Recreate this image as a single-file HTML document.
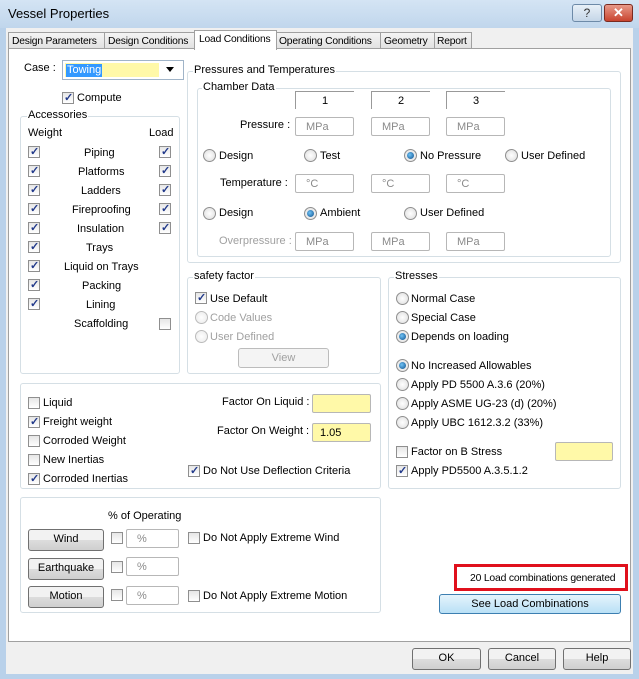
<!DOCTYPE html>
<html><head><style>
*{box-sizing:border-box;margin:0;padding:0}
body{width:639px;height:679px;overflow:hidden;background:#b9d1ea;font-family:"Liberation Sans",sans-serif;font-size:11px;color:#000;position:relative}
div,span{position:absolute}
.t{white-space:nowrap;line-height:13px}
.tb{font-size:10.3px;letter-spacing:-0.2px}
.g{border:1px solid #d5dfe5;border-radius:3px}
.cb{width:12px;height:12px;border:1px solid #8f8f8f;background:linear-gradient(#e6e6e6,#fff)}
.cb.c::after{content:"✓";position:absolute;left:1px;top:-2px;font-size:11px;color:#21398a;font-weight:bold}
.rb{width:13px;height:13px;border:1px solid #8f8f8f;border-radius:50%;background:radial-gradient(#fff,#dcdcdc)}
.rb.c::after{content:"";position:absolute;left:2px;top:2px;width:7px;height:7px;border-radius:50%;background:radial-gradient(circle at 40% 40%,#6fc3f6,#0d4d8a)}
.in{height:19px;border:1px solid #b7b7b7;background:#fff;color:#8a8a8a;padding:3px 0 0 10px;border-radius:2px}
.y{background:#fff9a8;color:#000}
.bt{border:1px solid #707070;border-radius:3px;background:linear-gradient(#f2f2f2 50%,#dddddd 50%,#cfcfcf);text-align:center;line-height:19px}
.d{color:#a0a0a0}
</style></head><body>
<div style="left:0;top:0;width:639px;height:28px;background:linear-gradient(#d4e4f4,#c0d6ec)"></div>
<div class="t" style="left:8px;top:7px;font-size:13px">Vessel Properties</div>
<div style="left:572px;top:4px;width:30px;height:18px;border:1px solid #6d8aa8;border-radius:3px;background:linear-gradient(#e8f0f8,#c5d6e8);text-align:center;color:#333;font-size:12px;line-height:16px">?</div>
<div style="left:604px;top:4px;width:29px;height:18px;border:1px solid #7a2a20;border-radius:3px;background:linear-gradient(#e89a8a,#c8442f);text-align:center;color:#fff;font-weight:bold;font-size:13px;line-height:16px">✕</div>
<div style="left:6px;top:28px;width:627px;height:646px;background:#f0f0f0"></div>
<!-- tabs -->
<div style="left:8px;top:32px;width:97px;height:17px;border:1px solid #a0a0a0;background:linear-gradient(#f4f4f4,#e2e2e2)"></div><div class="t tb" style="left:12px;top:35px">Design Parameters</div>
<div style="left:104px;top:32px;width:91px;height:17px;border:1px solid #a0a0a0;background:linear-gradient(#f4f4f4,#e2e2e2)"></div><div class="t tb" style="left:108px;top:35px">Design Conditions</div>
<div style="left:276px;top:32px;width:105px;height:17px;border:1px solid #a0a0a0;background:linear-gradient(#f4f4f4,#e2e2e2)"></div><div class="t tb" style="left:279px;top:35px">Operating Conditions</div>
<div style="left:380px;top:32px;width:55px;height:17px;border:1px solid #a0a0a0;background:linear-gradient(#f4f4f4,#e2e2e2)"></div><div class="t tb" style="left:384px;top:35px">Geometry</div>
<div style="left:434px;top:32px;width:38px;height:17px;border:1px solid #a0a0a0;background:linear-gradient(#f4f4f4,#e2e2e2)"></div><div class="t tb" style="left:437px;top:35px">Report</div>
<!-- panel -->
<div style="left:8px;top:48px;width:623px;height:594px;border:1px solid #a0a0a0;background:#fff"></div>
<div style="left:194px;top:30px;width:83px;height:20px;border:1px solid #a0a0a0;border-bottom:none;background:#fff"></div><div class="t tb" style="left:199px;top:33px">Load Conditions</div>

<div class="t" style="left:24px;top:62px">Case :</div>
<div style="left:62px;top:60px;width:122px;height:20px;border:1px solid #a0b4c8;background:#fff"></div>
<div style="left:65px;top:63px;width:94px;height:14px;background:#fff9a8"></div>
<div class="t" style="left:66px;top:64px;background:#3399ff;color:#fff;padding:0 1px">Towing</div>
<div style="left:166px;top:67px;border:4px solid transparent;border-top:5px solid #000"></div>
<div class="cb c" style="left:62px;top:92px"></div><div class="t" style="left:77px;top:92px">Compute</div>

<!-- Accessories -->
<div class="g" style="left:20px;top:116px;width:160px;height:258px"></div>
<div class="t" style="left:27px;top:109px;background:#fff;padding:0 1px">Accessories</div>
<div class="t" style="left:28px;top:127px">Weight</div><div class="t" style="left:149px;top:127px">Load</div>
<div class="cb c" style="left:28px;top:146px"></div><div class="t" style="left:84px;top:147px">Piping</div><div class="cb c" style="left:159px;top:146px"></div>
<div class="cb c" style="left:28px;top:165px"></div><div class="t" style="left:78px;top:166px">Platforms</div><div class="cb c" style="left:159px;top:165px"></div>
<div class="cb c" style="left:28px;top:184px"></div><div class="t" style="left:81px;top:185px">Ladders</div><div class="cb c" style="left:159px;top:184px"></div>
<div class="cb c" style="left:28px;top:203px"></div><div class="t" style="left:72px;top:204px">Fireproofing</div><div class="cb c" style="left:159px;top:203px"></div>
<div class="cb c" style="left:28px;top:222px"></div><div class="t" style="left:77px;top:223px">Insulation</div><div class="cb c" style="left:159px;top:222px"></div>
<div class="cb c" style="left:28px;top:241px"></div><div class="t" style="left:86px;top:242px">Trays</div>
<div class="cb c" style="left:28px;top:260px"></div><div class="t" style="left:64px;top:261px">Liquid on Trays</div>
<div class="cb c" style="left:28px;top:279px"></div><div class="t" style="left:82px;top:280px">Packing</div>
<div class="cb c" style="left:28px;top:298px"></div><div class="t" style="left:86px;top:299px">Lining</div>
<div class="t" style="left:74px;top:318px">Scaffolding</div><div class="cb" style="left:159px;top:318px"></div>

<!-- Pressures -->
<div class="g" style="left:187px;top:71px;width:434px;height:192px"></div>
<div class="t" style="left:193px;top:64px;background:#fff;padding:0 1px">Pressures and Temperatures</div>
<div class="g" style="left:197px;top:88px;width:414px;height:169px"></div>
<div class="t" style="left:202px;top:81px;background:#fff;padding:0 1px">Chamber Data</div>
<div style="left:295px;top:91px;width:59px;height:18px;border-left:1px solid #999;border-top:1px solid #999;text-align:center;line-height:18px">1</div>
<div style="left:371px;top:91px;width:59px;height:18px;border-left:1px solid #999;border-top:1px solid #999;text-align:center;line-height:18px">2</div>
<div style="left:446px;top:91px;width:59px;height:18px;border-left:1px solid #999;border-top:1px solid #999;text-align:center;line-height:18px">3</div>
<div class="t" style="left:240px;top:119px">Pressure :</div>
<div class="in" style="left:295px;top:117px;width:59px">MPa</div><div class="in" style="left:371px;top:117px;width:59px">MPa</div><div class="in" style="left:446px;top:117px;width:59px">MPa</div>
<div class="rb" style="left:203px;top:149px"></div><div class="t" style="left:219px;top:150px">Design</div>
<div class="rb" style="left:304px;top:149px"></div><div class="t" style="left:320px;top:150px">Test</div>
<div class="rb c" style="left:404px;top:149px"></div><div class="t" style="left:420px;top:150px">No Pressure</div>
<div class="rb" style="left:505px;top:149px"></div><div class="t" style="left:521px;top:150px">User Defined</div>
<div class="t" style="left:220px;top:177px">Temperature :</div>
<div class="in" style="left:295px;top:174px;width:59px">°C</div><div class="in" style="left:371px;top:174px;width:59px">°C</div><div class="in" style="left:446px;top:174px;width:59px">°C</div>
<div class="rb" style="left:203px;top:207px"></div><div class="t" style="left:219px;top:207px">Design</div>
<div class="rb c" style="left:304px;top:207px"></div><div class="t" style="left:320px;top:207px">Ambient</div>
<div class="rb" style="left:404px;top:207px"></div><div class="t" style="left:420px;top:207px">User Defined</div>
<div class="t d" style="left:219px;top:235px">Overpressure :</div>
<div class="in" style="left:295px;top:232px;width:59px">MPa</div><div class="in" style="left:371px;top:232px;width:59px">MPa</div><div class="in" style="left:446px;top:232px;width:59px">MPa</div>

<!-- safety -->
<div class="g" style="left:187px;top:277px;width:194px;height:97px"></div>
<div class="t" style="left:193px;top:270px;background:#fff;padding:0 1px">safety factor</div>
<div class="cb c" style="left:195px;top:292px"></div><div class="t" style="left:210px;top:293px">Use Default</div>
<div class="rb" style="left:195px;top:311px;opacity:.6"></div><div class="t d" style="left:210px;top:312px">Code Values</div>
<div class="rb" style="left:195px;top:330px;opacity:.6"></div><div class="t d" style="left:210px;top:331px">User Defined</div>
<div class="bt d" style="left:238px;top:348px;width:91px;height:20px;border-color:#bcbcbc;background:#f4f4f4">View</div>

<!-- Stresses -->
<div class="g" style="left:388px;top:277px;width:233px;height:212px"></div>
<div class="t" style="left:394px;top:270px;background:#fff;padding:0 1px">Stresses</div>
<div class="rb" style="left:396px;top:292px"></div><div class="t" style="left:411px;top:293px">Normal Case</div>
<div class="rb" style="left:396px;top:311px"></div><div class="t" style="left:411px;top:312px">Special Case</div>
<div class="rb c" style="left:396px;top:330px"></div><div class="t" style="left:411px;top:331px">Depends on loading</div>
<div class="rb c" style="left:396px;top:359px"></div><div class="t" style="left:411px;top:360px">No Increased Allowables</div>
<div class="rb" style="left:396px;top:378px"></div><div class="t" style="left:411px;top:379px">Apply PD 5500 A.3.6 (20%)</div>
<div class="rb" style="left:396px;top:397px"></div><div class="t" style="left:411px;top:398px">Apply ASME UG-23 (d) (20%)</div>
<div class="rb" style="left:396px;top:416px"></div><div class="t" style="left:411px;top:417px">Apply UBC 1612.3.2 (33%)</div>
<div class="cb" style="left:396px;top:446px"></div><div class="t" style="left:411px;top:446px">Factor on B Stress</div>
<div class="in y" style="left:555px;top:442px;width:58px"></div>
<div class="cb c" style="left:396px;top:465px"></div><div class="t" style="left:411px;top:465px">Apply PD5500 A.3.5.1.2</div>

<!-- liquid group -->
<div class="g" style="left:20px;top:383px;width:361px;height:106px"></div>
<div class="cb" style="left:28px;top:397px"></div><div class="t" style="left:43px;top:397px">Liquid</div>
<div class="cb c" style="left:28px;top:416px"></div><div class="t" style="left:43px;top:416px">Freight weight</div>
<div class="cb" style="left:28px;top:435px"></div><div class="t" style="left:43px;top:435px">Corroded Weight</div>
<div class="cb" style="left:28px;top:454px"></div><div class="t" style="left:43px;top:454px">New Inertias</div>
<div class="cb c" style="left:28px;top:473px"></div><div class="t" style="left:43px;top:473px">Corroded Inertias</div>
<div class="t" style="left:222px;top:396px">Factor On Liquid :</div>
<div class="in y" style="left:312px;top:394px;width:59px"></div>
<div class="t" style="left:217px;top:425px">Factor On Weight :</div>
<div class="in y" style="left:312px;top:423px;width:59px;padding-left:7px">1.05</div>
<div class="cb c" style="left:188px;top:465px"></div><div class="t" style="left:203px;top:465px">Do Not Use Deflection Criteria</div>

<!-- wind group -->
<div class="g" style="left:20px;top:497px;width:361px;height:116px"></div>
<div class="t" style="left:108px;top:510px">% of Operating</div>
<div class="bt" style="left:28px;top:529px;width:76px;height:22px">Wind</div>
<div class="bt" style="left:28px;top:558px;width:76px;height:22px">Earthquake</div>
<div class="bt" style="left:28px;top:586px;width:76px;height:22px">Motion</div>
<div class="cb" style="left:111px;top:532px"></div><div class="in" style="left:126px;top:529px;width:53px">%</div>
<div class="cb" style="left:111px;top:561px"></div><div class="in" style="left:126px;top:557px;width:53px">%</div>
<div class="cb" style="left:111px;top:589px"></div><div class="in" style="left:126px;top:586px;width:53px">%</div>
<div class="cb" style="left:188px;top:532px"></div><div class="t" style="left:203px;top:532px">Do Not Apply Extreme Wind</div>
<div class="cb" style="left:188px;top:590px"></div><div class="t" style="left:203px;top:590px">Do Not Apply Extreme Motion</div>

<div style="left:454px;top:564px;width:174px;height:27px;border:3px solid #e0101c"></div>
<div class="t" style="left:470px;top:572px;font-size:10.4px;letter-spacing:-0.2px">20 Load combinations generated</div>
<div style="left:439px;top:594px;width:182px;height:20px;border:1px solid #3c7fb1;border-radius:3px;background:linear-gradient(#e5f4fc,#b9e0f6);text-align:center;line-height:18px">See Load Combinations</div>

<div class="bt" style="left:412px;top:648px;width:69px;height:22px">OK</div>
<div class="bt" style="left:488px;top:648px;width:68px;height:22px">Cancel</div>
<div class="bt" style="left:563px;top:648px;width:68px;height:22px">Help</div>
</body></html>
